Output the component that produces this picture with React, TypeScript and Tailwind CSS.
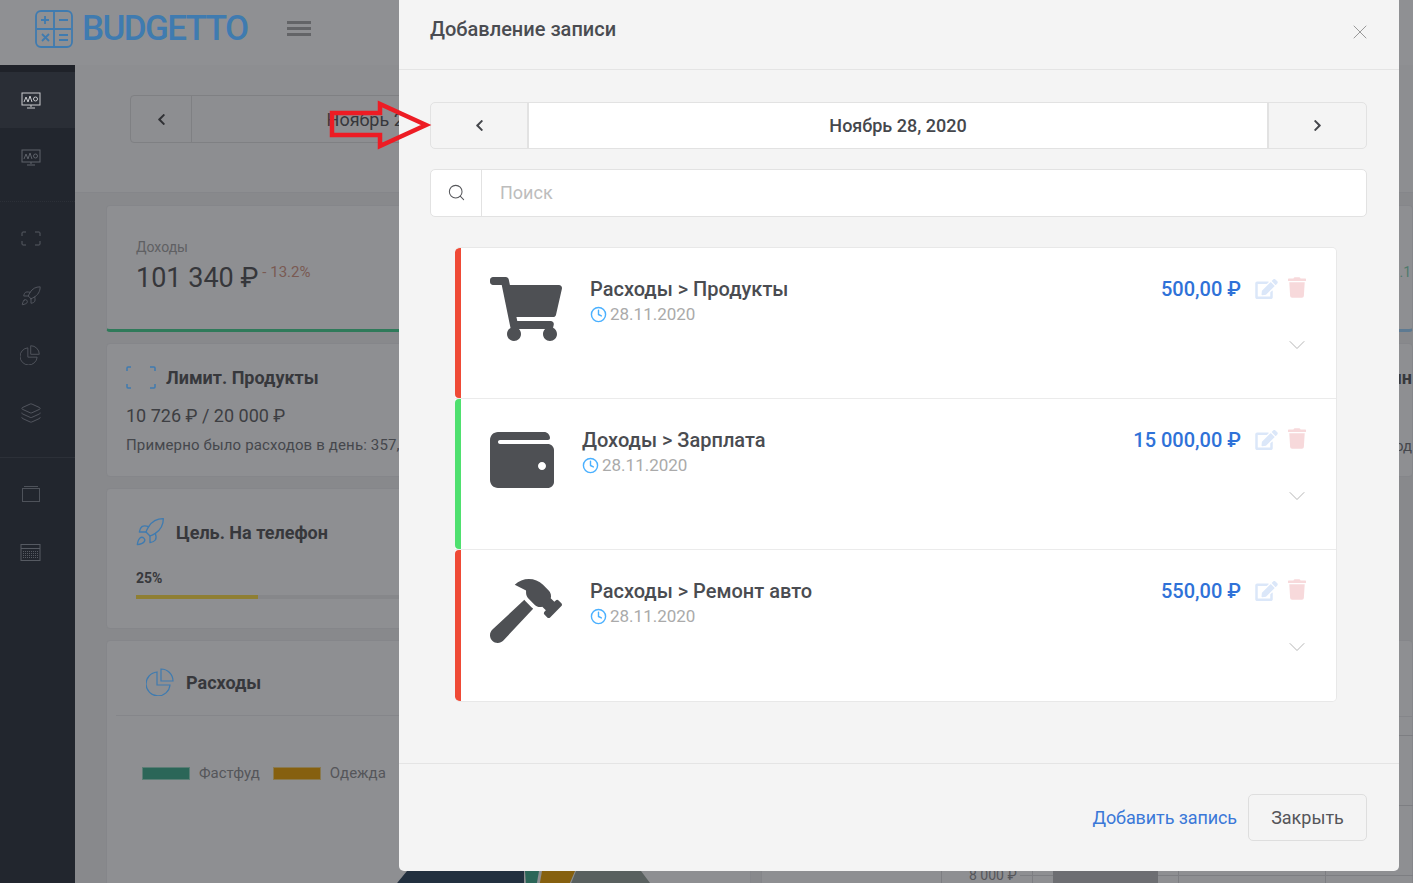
import React from "react";
import { ChevronDown, Clock, Layers, Rocket, Search, X } from "lucide-react";
import { FaChevronLeft, FaChevronRight, FaEdit, FaHammer, FaShoppingCart, FaTrash, FaWallet } from "react-icons/fa";

const font = { fontFamily: '"Roboto", "Noto Sans", sans-serif' };

const Logo = () => (
  <svg width="40" height="40" viewBox="0 0 40 40" fill="none" stroke="#3f7bb0" strokeWidth="1.8">
    <rect x="2" y="2" width="36" height="36" rx="5" />
    <path d="M20 3v34M3 20h34" />
    <path d="M7 11h8M11 7v8M25 11h9M8 25l7 7M15 25l-7 7M25 26h9M25 31h9" />
  </svg>
);

const MonitorWave = ({ color }: { color: string }) => (
  <svg width="20" height="17" viewBox="0 0 20 17" fill="none" stroke={color} strokeWidth="1">
    <rect x="1" y="1" width="18" height="12" />
    <path d="M3 10l2-5 2 5 2-6 2 6" />
    <circle cx="14.500" cy="7" r="2" />
    <path d="M10 13v2M6 16h8" />
  </svg>
);

const Corners = ({ color, w, h, sw = 1 }: { color: string; w: number; h: number; sw?: number }) => (
  <svg width={w} height={h} viewBox={`0 0 ${w} ${h}`} fill="none" stroke={color} strokeWidth={sw}>
    <path d={`M1 5V2a1 1 0 0 1 1-1h3M${w - 6} 1h4a1 1 0 0 1 1 1v3M${w - 1} ${h - 5}v3a1 1 0 0 1-1 1h-4M5 ${h - 1}H2a1 1 0 0 1-1-1v-3`} />
  </svg>
);

const PieIcon = ({ color, size }: { color: string; size: number }) => (
  <svg width={size} height={size} viewBox="0 0 28 28" fill="none" stroke={color} strokeWidth="1.2">
    <path d="M11 4a12 12 0 1 0 13 13H11z" />
    <path d="M15 1a12 12 0 0 1 12 12H15z" />
  </svg>
);

const WindowIcon = () => (
  <svg width="20" height="17" viewBox="0 0 20 17" fill="none" stroke="#4e525a" strokeWidth="1">
    <rect x="1.500" y="3.500" width="17" height="13" />
    <path d="M3 1.500h14" />
  </svg>
);

const CalendarIcon = () => (
  <svg width="21" height="18" viewBox="0 0 21 18" fill="none" stroke="#565a62" strokeWidth="1">
    <rect x="1" y="1.500" width="19" height="16" />
    <path d="M1 5.500h19" />
    <path d="M3 8.500h15M3 10.500h15M3 12.500h15M3 14.500h15" strokeDasharray="1 1" />
  </svg>
);

const Sidebar = () => (
  <aside className="w-[75px] h-full bg-[#22262e] flex flex-col shrink-0">
    <div className="h-[7px] bg-[#1f2229]" />
    <div className="h-[56px] bg-[#2a2e36] flex items-center pl-[21px]">
      <MonitorWave color="#c9cacd" />
    </div>
    <div className="h-[74px] pt-[21px] pl-[21px] border-b border-dotted border-[#2c3038]">
      <MonitorWave color="#5f636b" />
    </div>
    <div className="h-[7px]" />
    <div className="h-[58px] flex items-center pl-[21px]">
      <Corners color="#565a62" w={20} h={15} />
    </div>
    <div className="h-[58px] flex items-center pl-[20px]">
      <Rocket size={22} strokeWidth={1} color="#565a62" />
    </div>
    <div className="h-[59px] flex items-center pl-[20px]">
      <PieIcon color="#565a62" size={20} />
    </div>
    <div className="h-[58px] flex items-center pl-[20px]">
      <Layers size={22} strokeWidth={1} color="#565a62" />
    </div>
    <div className="h-[16px] border-b border-[#2c3038]" />
    <div className="h-[6px]" />
    <div className="h-[58px] flex items-center pl-[21px]">
      <WindowIcon />
    </div>
    <div className="h-[59px] flex items-center pl-[20px]">
      <CalendarIcon />
    </div>
  </aside>
);

const cardClass = "bg-[#8e8f92] border border-[#85868a] rounded-[4px]";

const LeftColumn = () => (
  <div className="w-[645px] shrink-0 flex flex-col gap-[11px]">
    <div className={`${cardClass} h-[127px] border-b-[3px] border-b-[#2f7a5a] pl-[29px] pt-[31px]`}>
      <div className="text-[14px] leading-[20px] text-[#5f6063]">Доходы</div>
      <div className="flex items-start mt-[4px]">
        <span className="text-[27px] leading-[34px] text-[#36373b]">101 340 ₽</span>
        <span className="text-[15px] leading-[20px] text-[#7a5a52] ml-[4px] mt-[1px]">- 13.2%</span>
      </div>
    </div>
    <div className={`${cardClass} h-[134px] pl-[19px] pt-[20px]`}>
      <div className="flex items-center gap-[10px]">
        <Corners color="#3f7bb0" w={30} h={23} sw={1.500} />
        <span className="text-[18px] font-bold text-[#37383c]">Лимит. Продукты</span>
      </div>
      <div className="text-[18px] leading-[24px] text-[#3d3e42] mt-[13px]">10 726 ₽ / 20 000 ₽</div>
      <div className="text-[15px] leading-[20px] tracking-[0.15px] text-[#45474c] mt-[7px]">Примерно было расходов в день: 357,50 ₽</div>
    </div>
    <div className={`${cardClass} h-[141px] pl-[29px] pt-[27px]`}>
      <div className="flex items-center gap-[10px]">
        <Rocket size={32} strokeWidth={1} color="#3f7bb0" className="ml-[-2px]" />
        <span className="text-[18px] font-bold text-[#37383c]">Цель. На телефон</span>
      </div>
      <div className="text-[14px] leading-[20px] font-bold text-[#37383c] mt-[20px]">25%</div>
      <div className="h-[4px] mt-[7px] mr-[30px] bg-[#86878a]">
        <div className="h-full w-[122px] bg-[#8f7f33]" />
      </div>
    </div>
    <div className={`${cardClass} h-[300px] px-[9px]`}>
      <div className="h-[75px] border-b border-[#85868a] pl-[30px] pt-[8px] flex items-center gap-[12px]">
        <PieIcon color="#3f7bb0" size={28} />
        <span className="text-[18px] font-bold text-[#37383c]">Расходы</span>
      </div>
      <div className="flex items-center mt-[47px] pl-[26px] text-[15px] leading-[20px] text-[#55565a]">
        <div className="w-[48px] h-[13px] bg-[#2b6658] border border-[#5b7d75]" />
        <span className="ml-[9px]">Фастфуд</span>
        <div className="w-[48px] h-[13px] bg-[#86600f] border border-[#8a7a50] ml-[13px]" />
        <span className="ml-[9px]">Одежда</span>
      </div>
      {/* pie */}
      <svg width="620" height="40" viewBox="0 0 620 40" className="mt-[88px] ml-[-9px]">
        <polygon points="300,0 417,0 417,40 267,40" fill="#22303f" />
        <polygon points="418,0 432,0 425,40 421,40" fill="#2b6658" />
        <polygon points="435,0 468,0 451,40 428,40" fill="#86600f" />
        <polygon points="469,0 534,0 564,40 453,40" fill="#59605f" />
      </svg>
    </div>
  </div>
);

const RightColumn = () => (
  <div className="flex-1 min-w-0 flex flex-col gap-[11px]">
    <div className={`${cardClass} h-[127px] border-b-[3px] border-b-[#5d7a92] pt-[56px] flex justify-end pr-[1px]`}>
      <span className="text-[14px] leading-[20px] text-[#4f7a6c]">+ 8.1</span>
    </div>
    <div className={`${cardClass} h-[134px] flex flex-col items-end pt-[22px]`}>
      <span className="text-[18px] leading-[24px] font-bold text-[#37383c]">Лимит. Машин</span>
      <span className="text-[15px] leading-[20px] text-[#45474c] mt-[46px]">Примерно было расход</span>
    </div>
    <div className="h-[141px]" />
    <div className={`${cardClass} h-[300px]`}>
      <div className="h-[76px] border-b border-[#85868a]" />
      {/* bar chart */}
      <svg width="652" height="170" viewBox="0 0 652 170">
        <g stroke="#7d7e82" strokeWidth="1">
          <path d="M0 18.500h652M0 88.500h652" />
          <path d="M258 158.500h33M396 158.500h256" />
          <path d="M179.500 130v40M270.500 130v40M416.500 130v40M563.500 130v40" />
        </g>
        <rect x="291" y="154" width="105" height="16" fill="#6d6e72" />
        <text x="207" y="163" fontSize="14" fill="#55565a">8 000 ₽</text>
      </svg>
    </div>
  </div>
);

const Page = () => (
  <div className="h-full flex flex-col">
    <header className="h-[65px] shrink-0 bg-[#8f9093] flex items-center pb-[8px]">
      <div className="ml-[34px]">
        <Logo />
      </div>
      <span className="ml-[8px] text-[35px] leading-none font-medium text-[#3f7bb0] tracking-[-1.6px]">BUDGETTO</span>
      <div className="ml-[39px] w-[24px] flex flex-col gap-[3px]">
        <div className="h-[3px] bg-[#636467]" />
        <div className="h-[3px] bg-[#636467]" />
        <div className="h-[3px] bg-[#636467]" />
      </div>
    </header>
    <div className="flex-1 min-h-0 flex">
      <Sidebar />
      <main className="flex-1 min-w-0 bg-[#88898c] overflow-hidden">
        <div className="h-[128px] bg-[#8d8e91] border-b border-[#85868a] pt-[30px] pl-[55px]">
          <div className="w-[468px] h-[48px] flex items-center border border-[#7f8083] rounded-[4px]">
            <div className="w-[61px] h-full flex items-center justify-center border-r border-[#7f8083]">
              <FaChevronLeft size={13} color="#303135" />
            </div>
            <div className="flex-1 text-center text-[18px] text-[#36373b]">Ноябрь 28, 2020</div>
          </div>
        </div>
        <div className="flex gap-[10px] pl-[31px] pt-[12px]">
          <LeftColumn />
          <RightColumn />
        </div>
      </main>
    </div>
  </div>
);

type Entry = {
  bar: string;
  icon: React.ReactNode;
  title: string;
  amount: string;
};

const entries: Entry[] = [
  { bar: "bg-[#ef4a36]", icon: <FaShoppingCart color="#4e5054" className="w-[72px] h-[64px]" />, title: "Расходы > Продукты", amount: "500,00 ₽" },
  { bar: "bg-[#4fe06f]", icon: <FaWallet color="#4e5054" className="w-[64px] h-[64px]" />, title: "Доходы > Зарплата", amount: "15 000,00 ₽" },
  { bar: "bg-[#ef4a36]", icon: <FaHammer color="#4e5054" className="w-[72px] h-[64px]" />, title: "Расходы > Ремонт авто", amount: "550,00 ₽" },
];

const EntryRow = ({ entry }: { entry: Entry }) => (
  <div className="h-[151px] flex bg-white border-b border-[#ebebeb] last:border-b-0">
    <div className={`w-[6px] shrink-0 rounded-l-[4px] ${entry.bar}`} />
    <div className="flex-1 flex pl-[29px] pr-[30px] pt-[29px]">
      <div className="mr-[28px]">{entry.icon}</div>
      <div className="flex-1">
        <div className="text-[20px] leading-[24px] text-[#4a4c51] font-medium">{entry.title}</div>
        <div className="flex items-center gap-[3px] text-[17px] leading-[24px] text-[#aaaaaa] mt-px">
          <Clock size={17} color="#4ab0ff" strokeWidth={2} />
          <span>28.11.2020</span>
        </div>
      </div>
      <div className="flex flex-col items-end">
        <div className="flex items-start">
          <span className="text-[20px] leading-[24px] font-medium text-[#2f72d8] mr-[14px]">{entry.amount}</span>
          <FaEdit color="#dbe7f9" className="w-[23px] h-[20px] mt-[2px] mr-[10px]" />
          <FaTrash color="#f7d9db" className="w-[18px] h-[21px]" />
        </div>
        <ChevronDown size={28} strokeWidth={0.85} color="#b5b5b5" className="mt-[30px] mr-[-5px]" />
      </div>
    </div>
  </div>
);

const Modal = () => (
  <div className="absolute left-[399px] top-0 w-[1000px] h-[871px] bg-[#f4f4f4] rounded-b-[5px] flex flex-col">
    <div className="h-[70px] shrink-0 border-b border-[#e4e4e4] flex items-center justify-between pl-[31px] pr-[27px]">
      <span className="text-[20px] font-medium text-[#4a4c51] mt-[-11px]">Добавление записи</span>
      <X size={24} strokeWidth={1} color="#999999" className="mt-[-6px]" />
    </div>
    <div className="flex-1 pl-[31px] pr-[32px] pt-[32px]">
      <div className="flex h-[47px] border border-[#e2e2e2] rounded-[5px] overflow-hidden">
        <div className="w-[98px] flex items-center justify-center border-r-2 border-[#e2e2e2]">
          <FaChevronLeft size={13} color="#45474c" />
        </div>
        <div className="flex-1 bg-white flex items-center justify-center text-[18px] font-medium text-[#45474c]">Ноябрь 28, 2020</div>
        <div className="w-[99px] flex items-center justify-center border-l-2 border-[#e2e2e2]">
          <FaChevronRight size={13} color="#45474c" />
        </div>
      </div>
      <div className="flex h-[48px] mt-[20px] bg-white border border-[#e2e2e2] rounded-[5px]">
        <div className="w-[51px] flex items-center justify-center border-r border-[#e2e2e2]">
          <Search size={19} strokeWidth={1.300} color="#55565a" className="mt-[-2px]" />
        </div>
        <input
          placeholder="Поиск"
          className="flex-1 pl-[18px] pb-[2px] text-[18px] outline-none placeholder:text-[#bdbdbd]"
          style={font}
        />
      </div>
      <div className="mt-[30px] mx-[25px] w-[882px] rounded-[5px] border-y border-r border-[#e8e8e8] overflow-hidden">
        {entries.map((entry) => (
          <EntryRow key={entry.title} entry={entry} />
        ))}
      </div>
    </div>
    <div className="h-[108px] shrink-0 border-t border-[#e4e4e4] flex items-start justify-end pt-[30px] pr-[32px]">
      <span className="text-[18px] leading-[47px] tracking-[-0.1px] text-[#3a78d8] mr-[11px]">Добавить запись</span>
      <button className="w-[119px] h-[47px] border border-[#dedede] rounded-[5px] text-[18px] text-[#55565a]">Закрыть</button>
    </div>
  </div>
);

const RedArrow = () => (
  <svg className="absolute left-[325px] top-[98px]" width="110" height="54" viewBox="0 0 110 54" fill="none">
    <polygon points="7,15 55,15 55,6 101,27 55,48 55,37 7,37" stroke="#ed1c24" strokeWidth="4.500" />
  </svg>
);

export default function App() {
  return (
    <div className="relative w-[1413px] h-[883px] overflow-hidden" style={font}>
      <Page />
      <Modal />
      <RedArrow />
    </div>
  );
}
